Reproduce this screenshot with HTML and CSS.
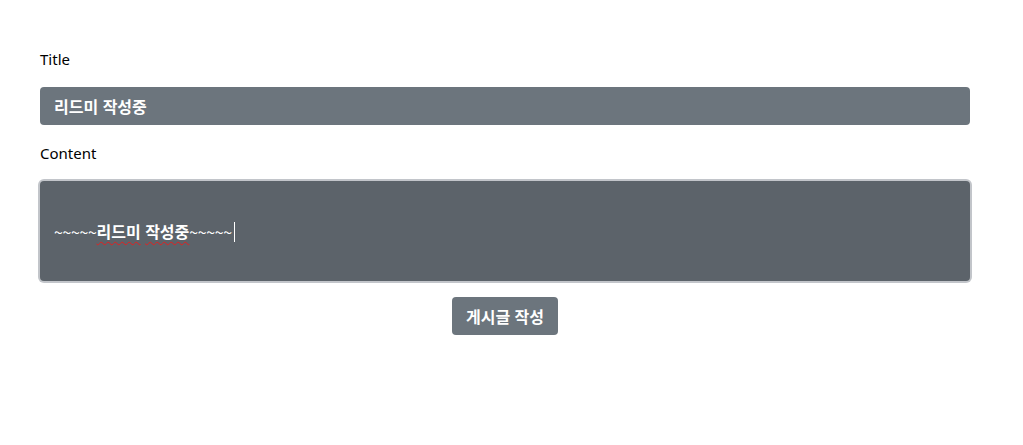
FILE: index.html
```html
<!DOCTYPE html>
<html lang="ko">
<head>
<meta charset="utf-8">
<link rel="stylesheet" href="styles.css">
</head>
<body>
<form class="form">
  <label class="label">Title</label>
  <div class="field">리드미 작성중</div>
  <label class="label">Content</label>
  <div class="area"><span class="line"><span class="tilde">~~~~~</span><span class="spell">리드미</span> <span class="spell">작성중</span><span class="tilde">~~~~~</span><span class="caret"></span></span></div>
  <div class="actions"><button type="button" class="btn">게시글 작성</button></div>
</form>
</body>
</html>
```
FILE: styles.css
```css
html, body { margin: 0; padding: 0; background: #fff; }
body {
  font-family: "Noto Sans", "Noto Sans CJK KR", sans-serif;
  font-size: 16px;
  color: #212529;
}
.form {
  width: 930px;
  padding: 47px 0 0 40px;
  display: flex;
  flex-direction: column;
}
.label {
  display: block;
  line-height: 24px;
  height: 24px;
  margin-bottom: 16px;
  color: #000;
  font-size: 15px;
}
.field {
  height: 38px;
  box-sizing: border-box;
  background: #6c757d;
  border-radius: 4px;
  color: #fff;
  font-weight: 700;
  font-family: "Noto Sans CJK KR", sans-serif;
  font-size: 16px;
  line-height: 38px;
  padding: 0 14px;
  margin-bottom: 16px;
}
.area {
  height: 100px;
  box-sizing: border-box;
  background: #5c636a;
  border-radius: 4px;
  box-shadow: 0 0 0 2px #c2c5ca;
  color: #fff;
  font-weight: 700;
  font-family: "Noto Sans CJK KR", sans-serif;
  font-size: 16px;
  line-height: 24px;
  padding: 0 14px;
  display: flex;
  align-items: center;
}
.line { white-space: pre; }
.tilde {
  font-weight: 400;
  letter-spacing: -0.4px;
  position: relative;
  top: 1px;
}
.spell {
  text-decoration: underline wavy #e02020;
  text-decoration-thickness: 1px;
  text-underline-offset: 3px;
}
.caret {
  display: inline-block;
  width: 1px;
  height: 20px;
  vertical-align: -4px;
  background: #fff;
  margin-left: 2px;
}
.actions {
  display: flex;
  justify-content: center;
  margin-top: 16px;
}
.btn {
  height: 38px;
  width: 106px;
  border: 0;
  border-radius: 4px;
  background: #6c757d;
  color: #fff;
  font-family: "Noto Sans CJK KR", sans-serif;
  font-weight: 700;
  font-size: 16px;
  padding: 0;
}
```
